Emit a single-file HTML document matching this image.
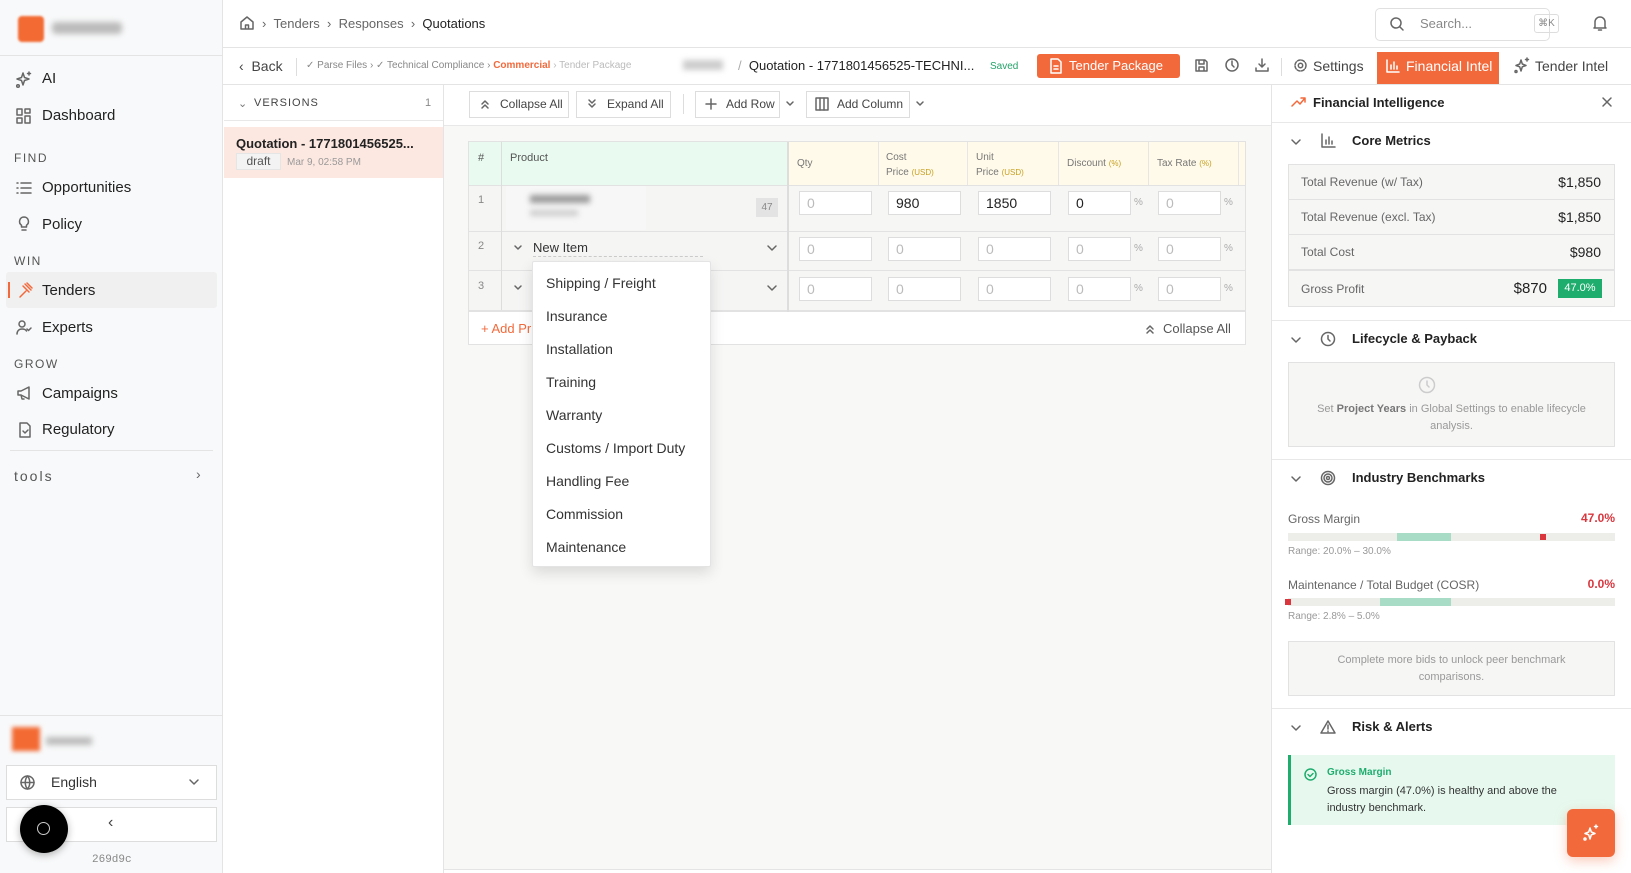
<!DOCTYPE html>
<html><head><meta charset="utf-8"><style>
*{box-sizing:border-box;margin:0;padding:0}
body{width:1631px;height:873px;overflow:hidden;font-family:"Liberation Sans",sans-serif;color:#222;background:#fff;position:relative;font-size:14px}
.a{position:absolute}
.t{position:absolute;white-space:nowrap}
svg{position:absolute;fill:none;stroke:#666;stroke-width:1.5;stroke-linecap:round;stroke-linejoin:round}
.sec{font-size:12px;letter-spacing:1.5px;color:#555}
.nav{font-size:15px;color:#222}
.btn{position:absolute;border:1px solid #ddd;background:#fff;font-size:12px;color:#444;height:27px;line-height:25px;padding-left:30px}
.inp{position:absolute;border:1px solid #ddd;background:#fff;height:24px;font-size:14px;line-height:22px;padding-left:7px;color:#bbb}
.inp.v{color:#222}
.pct{position:absolute;font-size:10px;color:#aaa}
.mi{position:absolute;left:13px;font-size:14px;color:#333}
.hd{font-size:13px;font-weight:bold;color:#222}
.ml{font-size:12px;color:#666}
.mv{font-size:14px;color:#222;text-align:right}
</style></head><body>
<!-- sidebar -->
<div class="a" style="left:0;top:0;width:223px;height:873px;background:#f8f9fa;border-right:1px solid #e4e4e4"></div>
<div class="a" style="left:18px;top:16px;width:26px;height:26px;background:#f36a33;border-radius:4px;filter:blur(1px)"></div>
<div class="a" style="left:52px;top:22px;width:70px;height:12px;background:#bbb;border-radius:4px;filter:blur(3px)"></div>
<div class="a" style="left:0;top:55px;width:223px;border-top:1px solid #e4e4e4"></div>
<svg style="left:14px;top:70px" width="20" height="20" viewBox="0 0 20 20"><path d="M9 3l1.5 4.5L15 9l-4.5 1.5L9 15l-1.5-4.5L3 9l4.5-1.5z"/><circle cx="4" cy="16" r="1.3"/><path d="M15 2v3M13.5 3.5h3"/></svg>
<div class="t nav" style="left:42px;top:70px">AI</div>
<svg style="left:15px;top:107px" width="18" height="18" viewBox="0 0 18 18"><rect x="2" y="2" width="5" height="6"/><rect x="10" y="2" width="5" height="4"/><rect x="2" y="11" width="5" height="5"/><rect x="10" y="9" width="5" height="7"/></svg>
<div class="t nav" style="left:42px;top:107px">Dashboard</div>
<div class="t sec" style="left:14px;top:151px">FIND</div>
<svg style="left:15px;top:179px" width="18" height="18" viewBox="0 0 18 18"><path d="M2 4h1M6 4h10M2 9h1M6 9h10M2 14h1M6 14h10"/></svg>
<div class="t nav" style="left:42px;top:179px">Opportunities</div>
<svg style="left:15px;top:215px" width="18" height="18" viewBox="0 0 18 18"><path d="M9 2a4.5 4.5 0 0 0-2.5 8.2V12h5v-1.8A4.5 4.5 0 0 0 9 2zM7 15h4"/></svg>
<div class="t nav" style="left:42px;top:216px">Policy</div>
<div class="t sec" style="left:14px;top:254px">WIN</div>
<div class="a" style="left:6px;top:272px;width:211px;height:36px;background:#f0f0f1;border-radius:3px"></div>
<div class="a" style="left:8px;top:282px;width:2px;height:16px;background:#f26a3c"></div>
<svg style="left:16px;top:281px;stroke:#f26a3c" width="18" height="18" viewBox="0 0 18 18"><path d="M9 3l6 6M11 2l5 5M4 16l6-6M7 5l6 6"/></svg>
<div class="t nav" style="left:42px;top:282px">Tenders</div>
<svg style="left:15px;top:318px" width="18" height="18" viewBox="0 0 18 18"><circle cx="7" cy="6" r="3"/><path d="M2 16c0-3 2-5 5-5s4 1 4.5 2M12 11l1.5 1.5L16 10"/></svg>
<div class="t nav" style="left:42px;top:319px">Experts</div>
<div class="t sec" style="left:14px;top:357px">GROW</div>
<svg style="left:15px;top:384px" width="18" height="18" viewBox="0 0 18 18"><path d="M3 7v4h3l8 4V3L6 7zM6 11l1 4h2"/></svg>
<div class="t nav" style="left:42px;top:385px">Campaigns</div>
<svg style="left:16px;top:421px" width="18" height="18" viewBox="0 0 18 18"><path d="M4 2h7l3 3v11H4zM7 10l2 2 3-3"/></svg>
<div class="t nav" style="left:42px;top:421px">Regulatory</div>
<div class="a" style="left:10px;top:450px;width:203px;border-top:1px solid #e4e4e4"></div>
<div class="t" style="left:14px;top:468px;font-size:14px;letter-spacing:2px;color:#555">tools</div>
<div class="t" style="left:196px;top:466px;font-size:14px;color:#666">›</div>
<div class="a" style="left:0;top:715px;width:223px;border-top:1px solid #e4e4e4"></div>
<div class="a" style="left:12px;top:727px;width:28px;height:24px;background:#f36a33;filter:blur(2px)"></div>
<div class="a" style="left:46px;top:737px;width:46px;height:8px;background:#bbb;filter:blur(3px)"></div>
<div class="a" style="left:6px;top:765px;width:211px;height:35px;border:1px solid #ddd;background:#fff"></div>
<svg style="left:19px;top:774px" width="17" height="17" viewBox="0 0 17 17"><circle cx="8.5" cy="8.5" r="6.5"/><path d="M2 8.5h13M8.5 2c-3 3.5-3 9.5 0 13M8.5 2c3 3.5 3 9.5 0 13"/></svg>
<div class="t" style="left:51px;top:774px;font-size:14px;color:#333">English</div>
<svg style="left:188px;top:776px" width="12" height="12" viewBox="0 0 12 12"><path d="M2 4l4 4 4-4"/></svg>
<div class="a" style="left:6px;top:807px;width:211px;height:35px;border:1px solid #ddd;background:#fff"></div>
<div class="t" style="left:108px;top:814px;font-size:16px;color:#444">‹</div>
<div class="a" style="left:20px;top:805px;width:48px;height:48px;border-radius:50%;background:#000;box-shadow:0 2px 8px rgba(0,0,0,.3)"></div>
<div class="a" style="left:37px;top:822px;width:13px;height:13px;border:1px solid #ccc;border-radius:50%"></div>
<div class="t" style="left:92px;top:854px;font-size:11px;color:#888;font-family:'Liberation Mono',monospace">269d9c</div>

<!-- top header -->
<div class="a" style="left:223px;top:47px;width:1408px;border-top:1px solid #e4e4e4"></div>
<svg style="left:239px;top:15px" width="16" height="16" viewBox="0 0 16 16"><path d="M2 7l6-5 6 5v7H2zM6.5 14v-4h3v4"/></svg>
<div class="t" style="left:262px;top:16px;font-size:13px;color:#666">›&nbsp;&nbsp;Tenders&nbsp;&nbsp;›&nbsp;&nbsp;Responses&nbsp;&nbsp;›&nbsp;&nbsp;<span style="color:#222">Quotations</span></div>
<div class="a" style="left:1375px;top:8px;width:175px;height:33px;border:1px solid #e0e0e0;border-radius:5px"></div>
<svg style="left:1389px;top:16px" width="16" height="16" viewBox="0 0 16 16"><circle cx="7" cy="7" r="5"/><path d="M11 11l3 3"/></svg>
<div class="t" style="left:1420px;top:16px;font-size:13px;color:#888">Search...</div>
<div class="a" style="left:1534px;top:14px;width:25px;height:19px;border:1px solid #ddd;border-radius:3px;font-size:10px;color:#888;text-align:center;line-height:17px">⌘K</div>
<svg style="left:1592px;top:15px" width="16" height="17" viewBox="0 0 16 17"><path d="M3 12V7a5 5 0 0 1 10 0v5l1 1H2zM6.5 15h3"/></svg>

<!-- second bar -->
<div class="a" style="left:223px;top:84px;width:1408px;border-top:1px solid #e4e4e4"></div>
<div class="t" style="left:239px;top:58px;font-size:14px;color:#444">‹&nbsp; Back</div>
<div class="a" style="left:296px;top:58px;height:18px;border-left:1px solid #ddd"></div>
<div class="t" style="left:306px;top:60px;font-size:10px;color:#888">✓ Parse Files › ✓ Technical Compliance › <span style="color:#f26a3c;font-weight:bold">Commercial</span> <span style="color:#bbb">› Tender Package</span></div>
<div class="a" style="left:683px;top:60px;width:40px;height:10px;background:#ccc;filter:blur(3px)"></div>
<div class="t" style="left:738px;top:58px;font-size:13px;color:#222"><span style="color:#aaa">/</span>&nbsp; Quotation - 1771801456525-TECHNI...</div>
<div class="t" style="left:990px;top:61px;font-size:10px;color:#26a269">Saved</div>
<div class="a" style="left:1037px;top:54px;width:143px;height:24px;background:#f26a3c;border-radius:3px"></div>
<svg style="left:1049px;top:58px;stroke:#fff" width="14" height="16" viewBox="0 0 14 16"><path d="M2 1h7l3 3v11H2zM5 8h4M5 11h4"/></svg>
<div class="t" style="left:1069px;top:58px;font-size:13px;color:#fff">Tender Package</div>
<svg style="left:1194px;top:58px" width="15" height="15" viewBox="0 0 15 15"><path d="M2 2h9l2 2v9H2zM5 2v4h5V2M5 13V9h5v4"/></svg>
<svg style="left:1224px;top:57px" width="16" height="16" viewBox="0 0 16 16"><circle cx="8" cy="8" r="6"/><path d="M8 4v4l2 2"/></svg>
<svg style="left:1254px;top:57px" width="16" height="16" viewBox="0 0 16 16"><path d="M8 2v8M5 7l3 3 3-3M2 11v3h12v-3"/></svg>
<div class="a" style="left:1281px;top:58px;height:18px;border-left:1px solid #ddd"></div>
<svg style="left:1293px;top:58px" width="15" height="15" viewBox="0 0 15 15"><circle cx="7.5" cy="7.5" r="2.2"/><circle cx="7.5" cy="7.5" r="5.5" stroke-dasharray="3 1.5"/></svg>
<div class="t" style="left:1313px;top:58px;font-size:14px;color:#444">Settings</div>
<div class="a" style="left:1377px;top:52px;width:122px;height:32px;background:#f26a3c"></div>
<svg style="left:1386px;top:59px;stroke:#fff" width="14" height="14" viewBox="0 0 14 14"><path d="M1 1v12h12M5 10V6M8 10V3M11 10V7"/></svg>
<div class="t" style="left:1406px;top:58px;font-size:14px;color:#fff">Financial Intel</div>
<svg style="left:1513px;top:57px" width="17" height="17" viewBox="0 0 17 17"><path d="M8 3l1.3 4L13 8.5l-3.7 1.3L8 14l-1.3-4.2L3 8.5l3.7-1.5z"/><circle cx="3" cy="14.5" r="1"/><path d="M14 1v3M12.5 2.5h3"/></svg>
<div class="t" style="left:1535px;top:58px;font-size:14px;color:#444">Tender Intel</div>

<!-- versions panel -->
<div class="a" style="left:443px;top:84px;height:789px;border-left:1px solid #e4e4e4"></div>
<div class="a" style="left:224px;top:120px;width:219px;border-top:1px solid #e8e8e8"></div>
<div class="t" style="left:238px;top:97px;font-size:11px;color:#777">⌄</div>
<div class="t" style="left:254px;top:97px;font-size:11px;letter-spacing:1px;color:#444">VERSIONS</div>
<div class="t" style="left:425px;top:97px;font-size:11px;color:#888">1</div>
<div class="a" style="left:224px;top:127px;width:219px;height:51px;background:#fde8e1"></div>
<div class="t" style="left:236px;top:136px;font-size:13px;font-weight:bold;color:#222">Quotation - 1771801456525...</div>
<div class="a" style="left:236px;top:153px;width:45px;height:17px;background:#f3f3f3;border:1px solid #e5e5e5;font-size:12px;color:#555;text-align:center;line-height:15px">draft</div>
<div class="t" style="left:287px;top:157px;font-size:10px;color:#999">Mar 9, 02:58 PM</div>

<!-- main area -->
<div class="a" style="left:444px;top:125px;width:827px;height:744px;background:#f8f8f6;border-top:1px solid #e8e8e8"></div>
<div class="a" style="left:444px;top:869px;width:827px;border-top:1px solid #e4e4e4"></div>
<div class="btn" style="left:469px;top:91px;width:100px">Collapse All</div>
<svg style="left:479px;top:98px" width="12" height="12" viewBox="0 0 12 12"><path d="M3 6l3-3 3 3M3 10l3-3 3 3"/></svg>
<div class="btn" style="left:576px;top:91px;width:95px">Expand All</div>
<svg style="left:586px;top:98px" width="12" height="12" viewBox="0 0 12 12"><path d="M3 2l3 3 3-3M3 6l3 3 3-3"/></svg>
<div class="a" style="left:683px;top:94px;height:20px;border-left:1px solid #ddd"></div>
<div class="btn" style="left:695px;top:91px;width:85px">Add Row</div>
<svg style="left:705px;top:98px" width="12" height="12" viewBox="0 0 12 12"><path d="M6 1v10M1 6h10"/></svg>
<svg style="left:785px;top:99px" width="10" height="10" viewBox="0 0 10 10"><path d="M2 3l3 3 3-3"/></svg>
<div class="btn" style="left:806px;top:91px;width:104px">Add Column</div>
<svg style="left:815px;top:97px" width="14" height="14" viewBox="0 0 14 14"><rect x="1" y="1" width="12" height="12"/><path d="M5 1v12M9 1v12"/></svg>
<svg style="left:915px;top:99px" width="10" height="10" viewBox="0 0 10 10"><path d="M2 3l3 3 3-3"/></svg>

<!-- table -->
<div class="a" style="left:468px;top:141px;width:778px;height:204px;border:1px solid #e2e2e2;background:#fff"></div>
<div class="a" style="left:469px;top:142px;width:32px;height:43px;background:#e9fbf1"></div>
<div class="a" style="left:501px;top:142px;width:286px;height:43px;background:#e9fbf1;border-left:1px solid #ddd"></div>
<div class="a" style="left:787px;top:142px;width:458px;height:43px;background:#fffaea;border-left:2px solid #ddd"></div>
<div class="t" style="left:478px;top:152px;font-size:11px;color:#555">#</div>
<div class="t" style="left:510px;top:152px;font-size:11px;color:#555">Product</div>
<div class="t" style="left:797px;top:158px;font-size:10px;color:#777">Qty</div>
<div class="t" style="left:886px;top:150px;font-size:10px;color:#777;line-height:15px">Cost<br>Price <span style="color:#c8a020;font-size:8px">(USD)</span></div>
<div class="t" style="left:976px;top:150px;font-size:10px;color:#777;line-height:15px">Unit<br>Price <span style="color:#c8a020;font-size:8px">(USD)</span></div>
<div class="t" style="left:1067px;top:158px;font-size:10px;color:#777">Discount <span style="color:#c8a020;font-size:8px">(%)</span></div>
<div class="t" style="left:1157px;top:158px;font-size:10px;color:#777">Tax Rate <span style="color:#c8a020;font-size:8px">(%)</span></div>
<div class="a" style="left:878px;top:142px;height:168px;border-left:1px solid #e6e6e6"></div>
<div class="a" style="left:967px;top:142px;height:168px;border-left:1px solid #e6e6e6"></div>
<div class="a" style="left:1058px;top:142px;height:168px;border-left:1px solid #e6e6e6"></div>
<div class="a" style="left:1148px;top:142px;height:168px;border-left:1px solid #e6e6e6"></div>
<div class="a" style="left:1238px;top:142px;height:168px;border-left:1px solid #e6e6e6"></div>
<div class="a" style="left:469px;top:185px;width:318px;height:125px;background:#f5f5f4"></div>
<div class="a" style="left:789px;top:185px;width:456px;height:125px;background:#f6f6f5"></div>
<div class="a" style="left:469px;top:185px;width:776px;border-top:1px solid #e2e2e2"></div>
<div class="a" style="left:469px;top:231px;width:776px;border-top:1px solid #e2e2e2"></div>
<div class="a" style="left:469px;top:270px;width:776px;border-top:1px solid #e2e2e2"></div>
<div class="a" style="left:469px;top:310px;width:776px;border-top:2px solid #e2e2e2"></div>
<div class="a" style="left:501px;top:185px;height:125px;border-left:1px solid #ddd"></div>
<div class="a" style="left:787px;top:142px;height:170px;border-left:2px solid #ddd"></div>
<div class="t" style="left:478px;top:194px;font-size:11px;color:#888">1</div>
<div class="t" style="left:478px;top:240px;font-size:11px;color:#888">2</div>
<div class="t" style="left:478px;top:280px;font-size:11px;color:#888">3</div>
<div class="a" style="left:506px;top:186px;width:140px;height:44px;background:#f7f7f7"></div>
<div class="a" style="left:530px;top:195px;width:60px;height:8px;background:#999;filter:blur(3px)"></div>
<div class="a" style="left:530px;top:210px;width:48px;height:6px;background:#ccc;filter:blur(3px)"></div>
<div class="a" style="left:756px;top:198px;width:22px;height:19px;background:#e3e3e3;font-size:10px;color:#888;text-align:center;line-height:19px">47</div>
<svg style="left:513px;top:243px" width="10" height="10" viewBox="0 0 10 10"><path d="M2 3l3 3 3-3"/></svg>
<div class="t" style="left:533px;top:240px;font-size:13px;color:#333">New Item</div>
<div class="a" style="left:533px;top:256px;width:170px;border-top:1px dashed #ccc"></div>
<svg style="left:766px;top:242px" width="12" height="12" viewBox="0 0 12 12"><path d="M2 4l4 4 4-4"/></svg>
<svg style="left:513px;top:283px" width="10" height="10" viewBox="0 0 10 10"><path d="M2 3l3 3 3-3"/></svg>
<div class="a" style="left:533px;top:296px;width:170px;border-top:1px dashed #ccc"></div>
<svg style="left:766px;top:282px" width="12" height="12" viewBox="0 0 12 12"><path d="M2 4l4 4 4-4"/></svg>
<div class="inp" style="left:799px;top:191px;width:73px">0</div>
<div class="inp v" style="left:888px;top:191px;width:73px">980</div>
<div class="inp v" style="left:978px;top:191px;width:73px">1850</div>
<div class="inp v" style="left:1068px;top:191px;width:63px">0</div><div class="pct" style="left:1134px;top:197px">%</div>
<div class="inp" style="left:1158px;top:191px;width:63px">0</div><div class="pct" style="left:1224px;top:197px">%</div>
<div class="inp" style="left:799px;top:237px;width:73px">0</div>
<div class="inp" style="left:888px;top:237px;width:73px">0</div>
<div class="inp" style="left:978px;top:237px;width:73px">0</div>
<div class="inp" style="left:1068px;top:237px;width:63px">0</div><div class="pct" style="left:1134px;top:243px">%</div>
<div class="inp" style="left:1158px;top:237px;width:63px">0</div><div class="pct" style="left:1224px;top:243px">%</div>
<div class="inp" style="left:799px;top:277px;width:73px">0</div>
<div class="inp" style="left:888px;top:277px;width:73px">0</div>
<div class="inp" style="left:978px;top:277px;width:73px">0</div>
<div class="inp" style="left:1068px;top:277px;width:63px">0</div><div class="pct" style="left:1134px;top:283px">%</div>
<div class="inp" style="left:1158px;top:277px;width:63px">0</div><div class="pct" style="left:1224px;top:283px">%</div>
<div class="t" style="left:481px;top:321px;font-size:13px;color:#f26a3c">+ Add Pr</div>
<svg style="left:1144px;top:323px" width="12" height="12" viewBox="0 0 12 12"><path d="M3 6l3-3 3 3M3 10l3-3 3 3"/></svg>
<div class="t" style="left:1163px;top:321px;font-size:13px;color:#555">Collapse All</div>
<!-- dropdown -->
<div class="a" style="left:532px;top:261px;width:179px;height:306px;background:#fff;border:1px solid #e4e4e4;border-radius:2px;box-shadow:0 6px 14px rgba(0,0,0,.12)">
<div class="mi" style="top:13px">Shipping / Freight</div>
<div class="mi" style="top:46px">Insurance</div>
<div class="mi" style="top:79px">Installation</div>
<div class="mi" style="top:112px">Training</div>
<div class="mi" style="top:145px">Warranty</div>
<div class="mi" style="top:178px">Customs / Import Duty</div>
<div class="mi" style="top:211px">Handling Fee</div>
<div class="mi" style="top:244px">Commission</div>
<div class="mi" style="top:277px">Maintenance</div>
</div>

<!-- right panel -->
<div class="a" style="left:1271px;top:84px;height:789px;border-left:1px solid #e4e4e4"></div>
<svg style="left:1291px;top:96px;stroke:#f26a3c" width="16" height="12" viewBox="0 0 16 12"><path d="M1 10l5-5 3 3 5-6M10 2h4v4"/></svg>
<div class="t hd" style="left:1313px;top:95px">Financial Intelligence</div>
<svg style="left:1601px;top:96px" width="12" height="12" viewBox="0 0 12 12"><path d="M2 2l8 8M10 2l-8 8"/></svg>
<div class="a" style="left:1272px;top:122px;width:359px;border-top:1px solid #e8e8e8"></div>
<svg style="left:1290px;top:136px" width="12" height="12" viewBox="0 0 12 12"><path d="M2 4l4 4 4-4"/></svg>
<svg style="left:1321px;top:133px" width="15" height="15" viewBox="0 0 15 15"><path d="M1 1v13h13M5 11V7M8 11V4M11 11V8"/></svg>
<div class="t hd" style="left:1352px;top:133px">Core Metrics</div>
<div class="a" style="left:1288px;top:164px;width:327px;height:143px;background:#f6f6f5;border:1px solid #e2e2e2"></div>
<div class="a" style="left:1289px;top:199px;width:325px;border-top:1px solid #e2e2e2"></div>
<div class="a" style="left:1289px;top:234px;width:325px;border-top:1px solid #e2e2e2"></div>
<div class="a" style="left:1289px;top:269px;width:325px;border-top:2px solid #e2e2e2"></div>
<div class="t ml" style="left:1301px;top:175px">Total Revenue (w/ Tax)</div><div class="t mv" style="right:30px;top:174px">$1,850</div>
<div class="t ml" style="left:1301px;top:210px">Total Revenue (excl. Tax)</div><div class="t mv" style="right:30px;top:209px">$1,850</div>
<div class="t ml" style="left:1301px;top:245px">Total Cost</div><div class="t mv" style="right:30px;top:244px">$980</div>
<div class="t ml" style="left:1301px;top:282px">Gross Profit</div><div class="t mv" style="right:84px;top:280px;font-size:15px">$870</div>
<div class="a" style="left:1558px;top:279px;width:44px;height:19px;background:#1fad6e;color:#fff;font-size:11px;text-align:center;line-height:19px">47.0%</div>
<div class="a" style="left:1272px;top:320px;width:359px;border-top:1px solid #e8e8e8"></div>
<svg style="left:1290px;top:334px" width="12" height="12" viewBox="0 0 12 12"><path d="M2 4l4 4 4-4"/></svg>
<svg style="left:1320px;top:331px" width="16" height="16" viewBox="0 0 16 16"><circle cx="8" cy="8" r="6.5"/><path d="M8 4.5V8l2 2"/></svg>
<div class="t hd" style="left:1352px;top:331px">Lifecycle &amp; Payback</div>
<div class="a" style="left:1288px;top:362px;width:327px;height:85px;background:#f6f6f5;border:1px solid #e2e2e2"></div>
<svg style="left:1418px;top:376px;stroke:#ccc" width="18" height="18" viewBox="0 0 18 18"><circle cx="9" cy="9" r="7.5"/><path d="M9 5v4l2 2"/></svg>
<div class="a" style="left:1288px;top:401px;width:327px;text-align:center;font-size:11px;color:#999;line-height:17px">Set <b style="color:#777">Project Years</b> in Global Settings to enable lifecycle<br>analysis.</div>
<div class="a" style="left:1272px;top:459px;width:359px;border-top:1px solid #e8e8e8"></div>
<svg style="left:1290px;top:473px" width="12" height="12" viewBox="0 0 12 12"><path d="M2 4l4 4 4-4"/></svg>
<svg style="left:1320px;top:470px" width="16" height="16" viewBox="0 0 16 16"><circle cx="8" cy="8" r="6.5"/><circle cx="8" cy="8" r="4"/><circle cx="8" cy="8" r="1.5"/></svg>
<div class="t hd" style="left:1352px;top:470px">Industry Benchmarks</div>
<div class="t ml" style="left:1288px;top:512px">Gross Margin</div>
<div class="t" style="right:16px;top:511px;font-size:12px;font-weight:bold;color:#d9363e">47.0%</div>
<div class="a" style="left:1288px;top:533px;width:327px;height:8px;background:#ededea"></div>
<div class="a" style="left:1397px;top:533px;width:54px;height:8px;background:#a9dcc6"></div>
<div class="a" style="left:1540px;top:534px;width:6px;height:6px;background:#d9363e"></div>
<div class="t" style="left:1288px;top:546px;font-size:10px;color:#999">Range: 20.0% – 30.0%</div>
<div class="t ml" style="left:1288px;top:578px">Maintenance / Total Budget (COSR)</div>
<div class="t" style="right:16px;top:577px;font-size:12px;font-weight:bold;color:#d9363e">0.0%</div>
<div class="a" style="left:1288px;top:598px;width:327px;height:8px;background:#ededea"></div>
<div class="a" style="left:1380px;top:598px;width:71px;height:8px;background:#a9dcc6"></div>
<div class="a" style="left:1285px;top:599px;width:6px;height:6px;background:#d9363e"></div>
<div class="t" style="left:1288px;top:611px;font-size:10px;color:#999">Range: 2.8% – 5.0%</div>
<div class="a" style="left:1288px;top:641px;width:327px;height:55px;background:#f6f6f5;border:1px solid #e2e2e2;text-align:center;font-size:11px;color:#999;line-height:17px;padding-top:10px">Complete more bids to unlock peer benchmark<br>comparisons.</div>
<div class="a" style="left:1272px;top:708px;width:359px;border-top:1px solid #e8e8e8"></div>
<svg style="left:1290px;top:722px" width="12" height="12" viewBox="0 0 12 12"><path d="M2 4l4 4 4-4"/></svg>
<svg style="left:1320px;top:719px" width="16" height="16" viewBox="0 0 16 16"><path d="M8 2L1 14h14zM8 6v4M8 12v.5"/></svg>
<div class="t hd" style="left:1352px;top:719px">Risk &amp; Alerts</div>
<div class="a" style="left:1288px;top:755px;width:327px;height:70px;background:#e7f9ef;border-left:3px solid #1fad6e"></div>
<svg style="left:1304px;top:768px;stroke:#1fad6e" width="13" height="13" viewBox="0 0 13 13"><circle cx="6.5" cy="6.5" r="5.5"/><path d="M4 6.5l2 2 3-3"/></svg>
<div class="t" style="left:1327px;top:767px;font-size:10px;font-weight:bold;color:#1fad6e">Gross Margin</div>
<div class="a" style="left:1327px;top:783px;font-size:11px;color:#333;line-height:17px">Gross margin (47.0%) is healthy and above the<br>industry benchmark.</div>
<div class="a" style="left:1567px;top:809px;width:48px;height:48px;background:#f26a3c;border-radius:6px;box-shadow:0 4px 12px rgba(242,106,60,.35)"></div>
<svg style="left:1582px;top:824px;stroke:#fff" width="18" height="18" viewBox="0 0 18 18"><path d="M8 4l1.3 4L13 9.5l-3.7 1.3L8 15l-1.3-4.2L3 9.5l3.7-1.5z"/><circle cx="3" cy="15" r="1"/><path d="M14 1v3M12.5 2.5h3"/></svg>
</body></html>
